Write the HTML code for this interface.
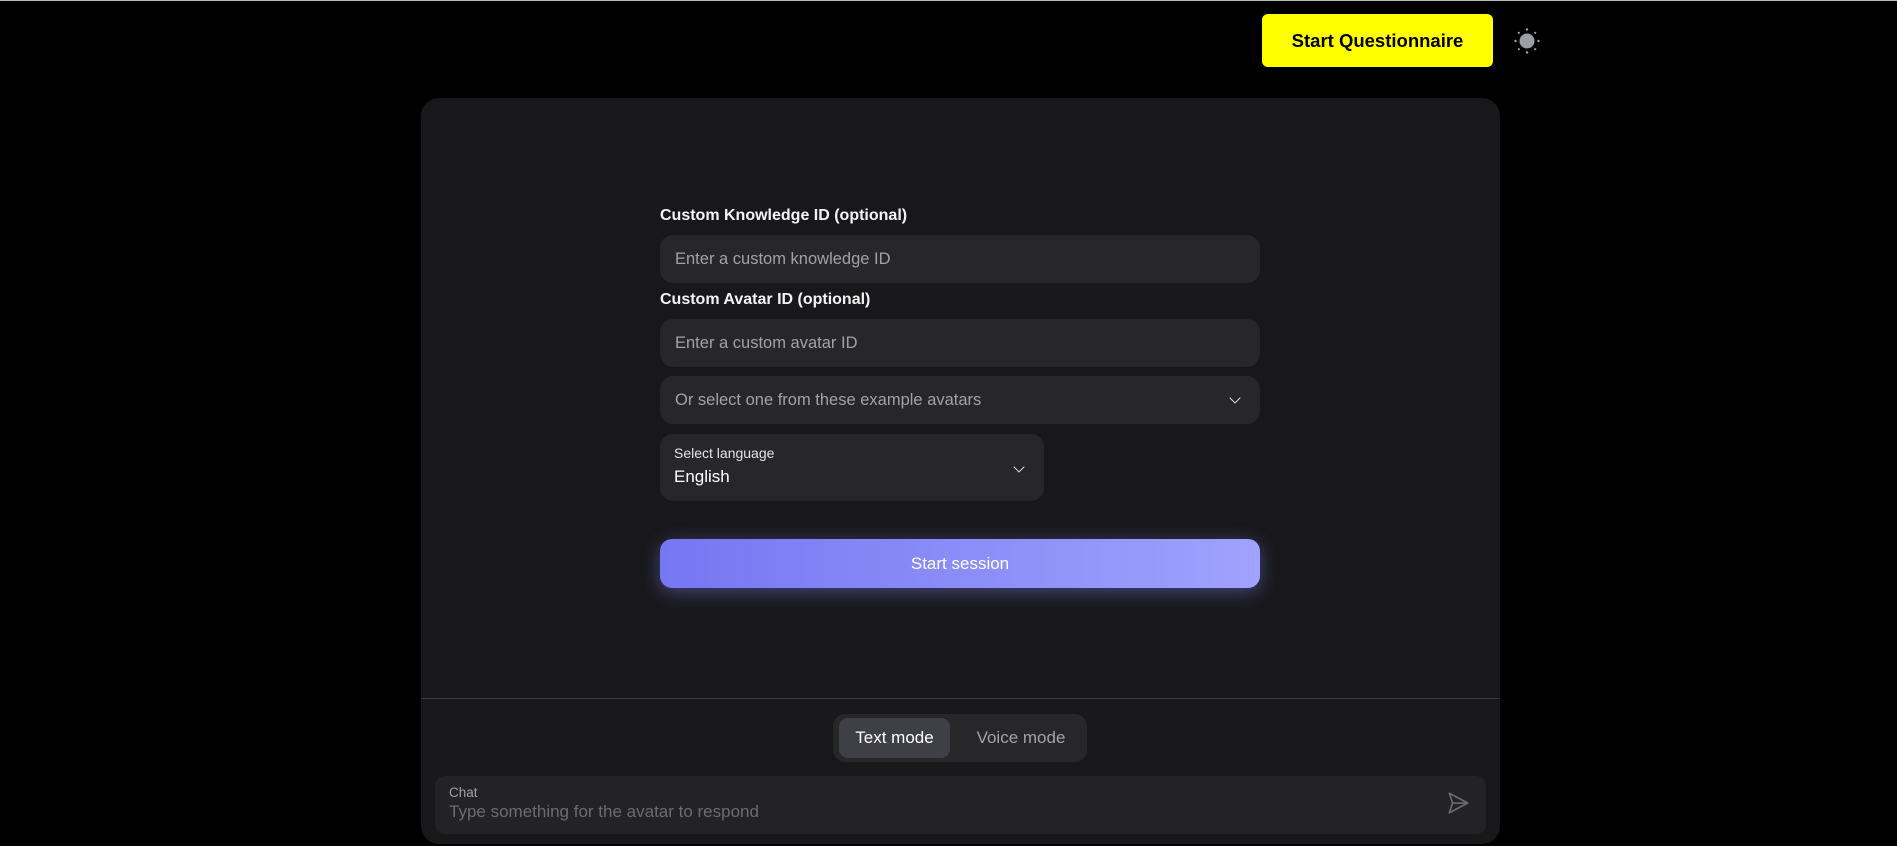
<!DOCTYPE html>
<html><head><meta charset="utf-8"><style>
*{box-sizing:border-box;margin:0;padding:0}
body{width:1897px;height:846px;background:#000;font-family:"Liberation Sans",sans-serif;position:relative;overflow:hidden;border-top:1px solid #bbb}
.a{position:absolute}
.btn{left:1262px;top:13px;width:231px;height:53px;background:#ff0;border-radius:6px;color:#000;font-weight:bold;font-size:18.5px;display:flex;align-items:center;justify-content:center}
.card{left:421px;top:97px;width:1079px;height:746px;background:#18181b;border-radius:18px}
.lbl{color:#f4f4f5;font-weight:bold;font-size:16px;left:660px}
.inp{left:660px;width:600px;height:48px;background:#27272a;border-radius:13px;color:#a1a1aa;font-size:16.5px;padding-left:15px;display:flex;align-items:center}
.chev{position:absolute;width:8px;height:8px;border-right:1.5px solid #ddd;border-bottom:1.5px solid #ddd;transform:rotate(45deg)}
</style></head><body>
<div class="a btn">Start Questionnaire</div>
<svg class="a" style="left:1513px;top:26px" width="28" height="28" viewBox="0 0 28 28"><circle cx="14" cy="14" r="7.5" fill="#9e9ea6"/><g fill="#9e9ea6"><circle cx="14" cy="2.5" r="1.2"/><circle cx="14" cy="25.5" r="1.2"/><circle cx="2.5" cy="14" r="1.2"/><circle cx="25.5" cy="14" r="1.2"/><circle cx="5.8" cy="5.8" r="1.1"/><circle cx="22.2" cy="5.8" r="1.1"/><circle cx="5.8" cy="22.2" r="1.1"/><circle cx="22.2" cy="22.2" r="1.1"/></g></svg>
<div class="a card"></div>
<div class="a lbl" style="top:206px">Custom Knowledge ID (optional)</div>
<div class="a inp" style="top:234px">Enter a custom knowledge ID</div>
<div class="a lbl" style="top:290px">Custom Avatar ID (optional)</div>
<div class="a inp" style="top:318px">Enter a custom avatar ID</div>
<div class="a inp" style="top:375px">Or select one from these example avatars<div class="chev" style="left:571px;top:18px"></div></div>
<div class="a" style="left:660px;top:433px;width:384px;height:67px;background:#27272a;border-radius:13px">
<div class="a" style="left:14px;top:11px;color:#e4e4e7;font-size:14px">Select language</div>
<div class="a" style="left:14px;top:33px;color:#fff;font-size:17px">English</div>
<div class="chev" style="left:355px;top:29px"></div></div>
<div class="a" style="left:660px;top:538px;width:600px;height:49px;border-radius:12px;background:linear-gradient(90deg,#7677f2,#a0a2fd);box-shadow:0 4px 18px rgba(124,124,245,.45);color:#fff;font-size:17px;display:flex;align-items:center;justify-content:center">Start session</div>
<div class="a" style="left:421px;top:697px;width:1079px;height:1px;background:#3a3a3e"></div>
<div class="a" style="left:833px;top:713px;width:254px;height:48px;background:#27272a;border-radius:12px"></div>
<div class="a" style="left:839px;top:717px;width:111px;height:40px;background:#3f3f46;border-radius:9px;color:#fff;font-size:17px;display:flex;align-items:center;justify-content:center">Text mode</div>
<div class="a" style="left:960px;top:717px;width:122px;height:40px;color:#a1a1aa;font-size:17px;display:flex;align-items:center;justify-content:center">Voice mode</div>
<div class="a" style="left:435px;top:775px;width:1051px;height:58px;background:#232326;border-radius:10px">
<div class="a" style="left:14px;top:9px;color:#a1a1aa;font-size:13.5px">Chat</div>
<div class="a" style="left:14px;top:26px;color:#6b6b73;font-size:17px">Type something for the avatar to respond</div>
<svg class="a" style="left:1010px;top:14px" width="26" height="26" viewBox="0 0 24 24" fill="none" stroke="#6b6b73" stroke-width="1.5" stroke-linejoin="round"><path d="M4 3l17 9-17 9 3-9z M7 12h14"/></svg>
</div>
</body></html>
